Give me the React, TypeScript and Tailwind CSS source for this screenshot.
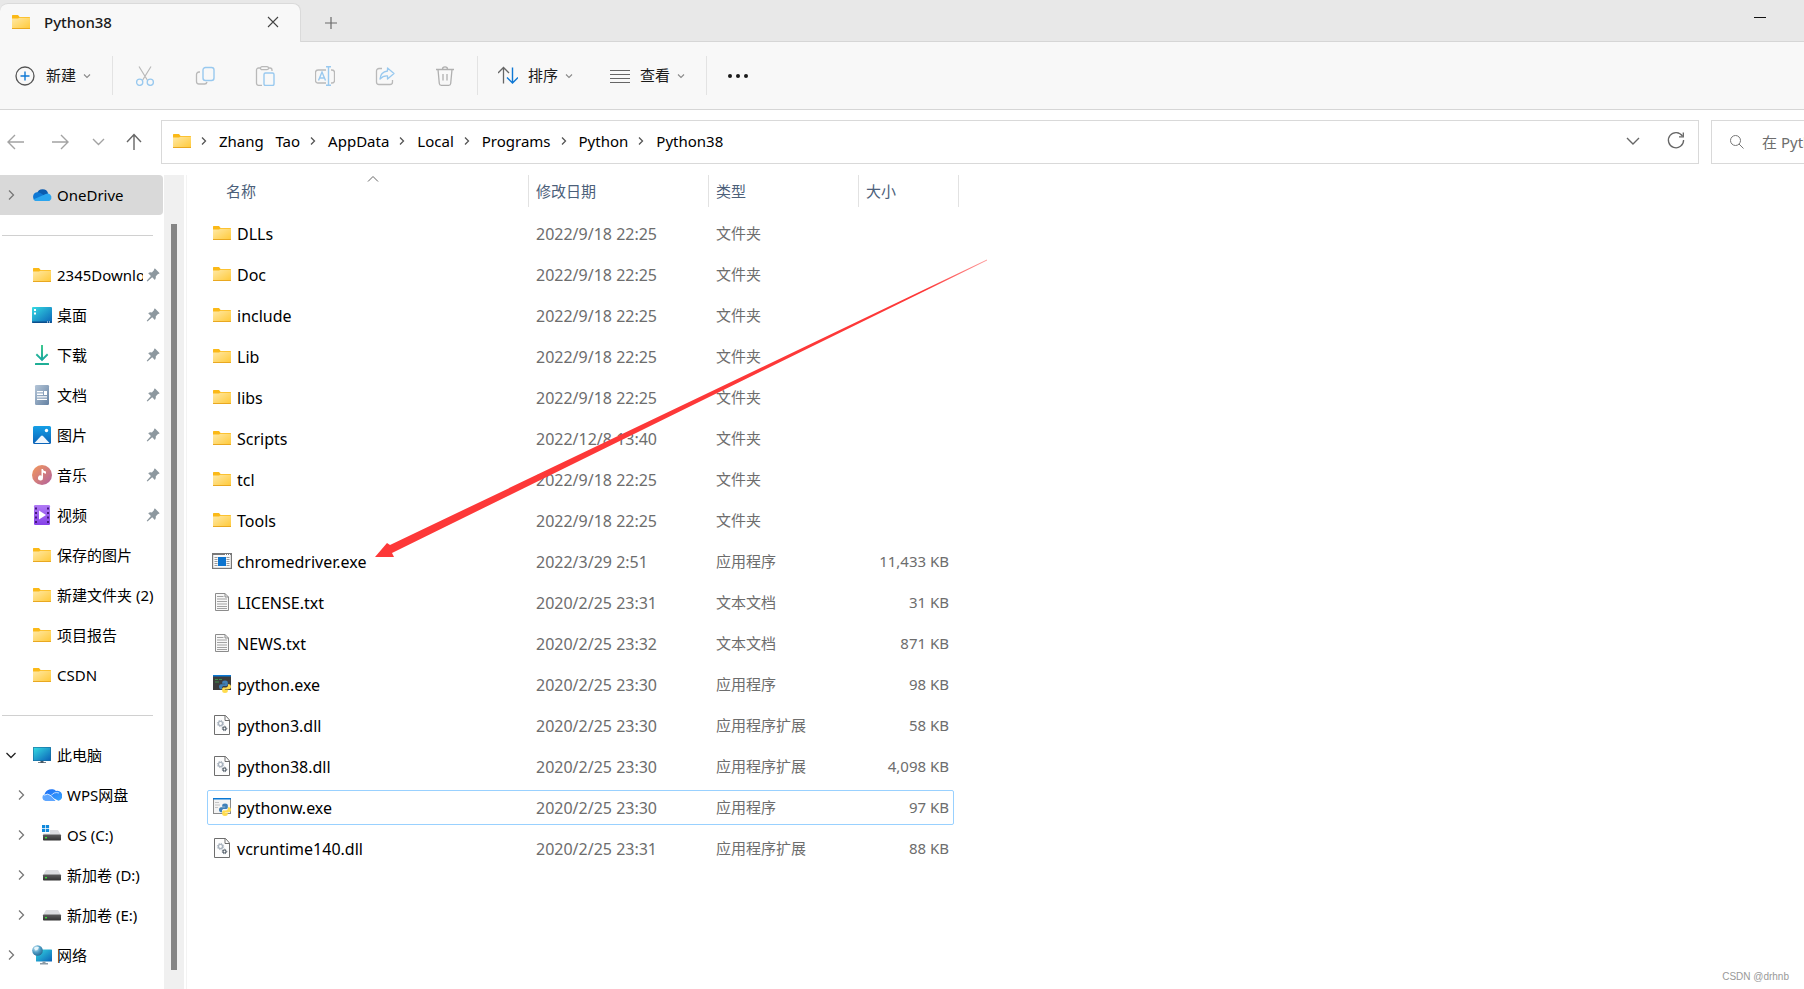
import React from "react";

type IconProps = { className?: string };

const Svg = ({
  size = 20,
  className = "",
  children,
}: {
  size?: number;
  className?: string;
  children: React.ReactNode;
}) => (
  <svg
    width={size}
    height={size}
    viewBox={`0 0 ${size} ${size}`}
    fill="none"
    aria-hidden="true"
    className={`shrink-0 ${className}`}
  >
    {children}
  </svg>
);

// Gradients shared by all icons
const Gradients = () => (
  <svg width="0" height="0" className="absolute" aria-hidden="true">
    <defs>
      <linearGradient id="folder" x1="0" y1="0" x2="1" y2="1">
        <stop offset="0" stopColor="#ffe9a6" />
        <stop offset="1" stopColor="#ffc938" />
      </linearGradient>
      <linearGradient id="screen" x1="0" y1="0" x2="1" y2="1">
        <stop offset="0" stopColor="#35dbe2" />
        <stop offset="1" stopColor="#0b62b8" />
      </linearGradient>
      <linearGradient id="down" x1="0" y1="0" x2="0" y2="1">
        <stop offset="0" stopColor="#3fc98f" />
        <stop offset="1" stopColor="#14a5a0" />
      </linearGradient>
      <linearGradient id="doc" x1="0" y1="0" x2="1" y2="1">
        <stop offset="0" stopColor="#b5c6d8" />
        <stop offset="1" stopColor="#6481a2" />
      </linearGradient>
      <linearGradient id="photo" x1="0" y1="0" x2="0" y2="1">
        <stop offset="0" stopColor="#159fe6" />
        <stop offset="1" stopColor="#0c63b8" />
      </linearGradient>
      <linearGradient id="music" x1="0" y1="0" x2="1" y2="1">
        <stop offset="0" stopColor="#f59a5a" />
        <stop offset="1" stopColor="#b0609f" />
      </linearGradient>
      <linearGradient id="video" x1="0" y1="0" x2="0" y2="1">
        <stop offset="0" stopColor="#b07af5" />
        <stop offset="1" stopColor="#8540e8" />
      </linearGradient>
      <linearGradient id="wps" x1="0" y1="0" x2="1" y2="1">
        <stop offset="0" stopColor="#1a6cf5" />
        <stop offset="1" stopColor="#3aa6ff" />
      </linearGradient>
      <linearGradient id="disk" x1="0" y1="0" x2="0" y2="1">
        <stop offset="0" stopColor="#5d5d5d" />
        <stop offset="1" stopColor="#333333" />
      </linearGradient>
      <radialGradient id="globe" cx="0.35" cy="0.3" r="0.8">
        <stop offset="0" stopColor="#d4f0fb" />
        <stop offset="0.5" stopColor="#4f9cc4" />
        <stop offset="1" stopColor="#1f618c" />
      </radialGradient>
    </defs>
  </svg>
);

const FolderIcon = () => (
  <Svg>
    <path d="M1 3.600C1 3.200 1.300 3 1.700 3H7l1.600 2H18.400c.4 0 .6.200.6.600V8H1z" fill="#fbb917" />
    <path d="M1 6.600H7L8.500 5.700H19V16.400c0 .4-.2.600-.6.600H1.600c-.4 0-.6-.2-.6-.6z" fill="url(#folder)" />
    <path d="M1 16h18v.4c0 .4-.2.600-.6.600H1.600c-.4 0-.6-.2-.6-.6z" fill="#e9a820" />
  </Svg>
);

const OneDriveIcon = () => (
  <Svg>
    <path d="M5 8.500a5.800 5.800 0 0 1 11.200 0L9.500 13z" fill="#0a5cb0" />
    <path d="M4.500 16A4.500 4.500 0 0 1 4.800 7.200c1.400-.1 2.600.2 3.700.9l6 4L6 16z" fill="#0f78d4" />
    <path d="M16 8.500a4 4 0 0 1 1.800 7.200q-.8.300-1.500.3H4.500a4.500 4.500 0 0 1-3.300-1.500L11.500 10q2.200-1.500 4.500-1.500z" fill="#2aa5ef" />
  </Svg>
);

const DesktopIcon = () => (
  <Svg>
    <rect x="0" y="2" width="20" height="16" rx="1" fill="url(#screen)" />
    <path d="M0 16.500h20V17a1 1 0 0 1-1 1H1a1 1 0 0 1-1-1z" fill="#0c4e8c" />
    <path d="M2 4h2v2H2zM2 7.500h2v2H2zM15 16.500h1v1h-1zM17 16.500h1v1h-1z" fill="#fff" />
  </Svg>
);

const DownloadIcon = () => (
  <Svg>
    <path d="M9 0h2v12.500l4-4 1.300 1.400L10 16.200 3.700 9.900 5 8.500l4 4z" fill="url(#down)" />
    <rect x="3" y="18" width="14" height="2" rx=".5" fill="#1fae96" />
  </Svg>
);

const DocumentIcon = () => (
  <Svg>
    <rect x="3" width="14" height="20" rx="1.200" fill="url(#doc)" />
    <path d="M5 6h6v1.300H5zM5 8.600h6v1.300H5zM12 6h3v3.900h-3zM5 11.200h10v1.300H5zM5 13.700h10V15H5z" fill="#fff" />
  </Svg>
);

const PictureIcon = () => (
  <Svg>
    <rect x="1" y="1" width="18" height="18" rx="1.500" fill="url(#photo)" />
    <circle cx="14.500" cy="5.500" r="1.700" fill="#fff" />
    <path d="M2.500 18 9 11q1-1 2 0l6.500 7z" fill="#eef6fd" />
  </Svg>
);

const MusicIcon = () => (
  <Svg>
    <circle cx="10" cy="10" r="10" fill="url(#music)" />
    <path d="M9.500 4h1.300q.4 2 3.200 2.500v2.200Q12 8.500 11 7.500V13a2.500 2.500 0 1 1-1.500-2.300z" fill="#fff" />
  </Svg>
);

const VideoIcon = () => (
  <Svg>
    <rect x="2" width="16" height="20" rx="1.200" fill="url(#video)" />
    <path
      d="M3 2.500h2v2H3zM3 7h2v2H3zM3 11.500h2v2H3zM3 16h2v2H3zM15 2.500h2v2h-2zM15 7h2v2h-2zM15 11.500h2v2h-2zM15 16h2v2h-2z"
      fill="#45187f"
    />
    <path d="M7 5.500 14 10l-7 4.500z" fill="#fff" />
  </Svg>
);

const ComputerIcon = () => (
  <Svg>
    <rect x="1" y="2" width="18" height="14" rx=".6" fill="#16699c" />
    <rect x="1.600" y="2.600" width="16.800" height="12.800" fill="url(#screen)" />
    <path d="M8.500 16h3v1.200H14V18H6v-.8h2.500z" fill="#4a5a66" />
  </Svg>
);

const WpsIcon = () => (
  <Svg>
    <path d="M2.500 9.500A7 7 0 0 1 14 6a5 5 0 0 1 2.500 9.800L9 12z" fill="url(#wps)" />
    <path d="M3.500 16A3.500 3.500 0 0 1 2.500 9.300Q6 7.500 9 10.500L14 16z" fill="#5ea6ff" />
    <path d="M2 10.200Q6 7.800 9 10.800L14 16M9.200 10.500Q12 6.500 17 8" stroke="#fff" strokeWidth=".7" />
  </Svg>
);

const DiskIcon = () => (
  <Svg>
    <path d="M4 5h12l3 5H1z" fill="#dcdde0" />
    <rect x="1" y="9.500" width="18" height="6" rx=".8" fill="url(#disk)" />
    <rect x="3" y="12" width="2" height="1.400" fill="#3fe03f" />
  </Svg>
);

const SystemDiskIcon = () => (
  <Svg>
    <path d="M8 5h8l3 5H1V8.500h7z" fill="#dcdde0" />
    <rect x="1" y="9.500" width="18" height="6" rx=".8" fill="url(#disk)" />
    <rect x="3" y="12" width="2" height="1.400" fill="#3fe03f" />
    <path d="M0 0h3.200v3.200H0zM3.900 0h3.200v3.200H3.900zM0 3.900h3.200v3.200H0zM3.900 3.900h3.200v3.200H3.900z" fill="#1189dc" />
  </Svg>
);

const NetworkIcon = () => (
  <Svg>
    <rect x="4" y="4.500" width="16" height="12" rx=".6" fill="url(#screen)" />
    <path d="M10.500 16.500h3V18H16v1.500H8V18h2.500z" fill="#8b9aa5" />
    <circle cx="5.500" cy="5.500" r="5.300" fill="url(#globe)" />
    <path d="M2 3q3-2 5-.5-1 2.500-3.500 3z" fill="#e6f6fc" />
  </Svg>
);

const AppIcon = () => (
  <Svg>
    <rect x=".6" y="2.600" width="18.800" height="14.800" fill="#fafafa" stroke="#787878" strokeWidth="1.200" />
    <path d="M0 2h20v2H0z" fill="#787878" />
    <path d="M13 3h1v1h-1zM15 3h1v1h-1zM17 3h1v1h-1z" fill="#fff" />
    <path d="M2.500 6.500h3M2.500 8.500h3M2.500 10.500h3M2.500 12.500h3M2.500 14.500h3M14.500 6.500h3M14.500 8.500h3M14.500 10.500h3M14.500 12.500h3M14.500 14.500h3" stroke="#9b9b9b" />
    <rect x="6" y="6" width="8" height="9" fill="#0c74cf" />
  </Svg>
);

const TextIcon = () => (
  <Svg>
    <path d="M3.500 1.500h9.500l3.500 3.500v13.500h-13z" fill="#f8f8f8" stroke="#8c8c8c" />
    <path d="M13 1.500V5h3.500" stroke="#8c8c8c" />
    <path d="M5 4.500h6.500M5 7h10M5 9.500h10M5 12h10M5 14.500h10M5 16.500h10" stroke="#a2a2a2" />
  </Svg>
);

const DllIcon = () => (
  <Svg>
    <path d="M2.500.5h11l4 4.500v14.500h-15z" fill="#fdfdfd" stroke="#6e6e6e" />
    <path d="M13 .5V5.500h4.500" stroke="#6e6e6e" />
    <circle cx="8.500" cy="8.500" r="2.100" stroke="#a8b2bd" strokeWidth="1.400" />
    <circle cx="8.500" cy="8.500" r="3.200" stroke="#a8b2bd" strokeDasharray="1.250 1.260" />
    <circle cx="12.500" cy="13.500" r="1.500" stroke="#58636e" strokeWidth="1.200" />
    <circle cx="12.500" cy="13.500" r="2.300" stroke="#58636e" strokeDasharray=".9 .9" />
  </Svg>
);

const snake =
  "M6 0C4 0 3.200.8 3.200 2v1.200h3v.5H2C.8 3.700 0 4.700 0 6.200S.8 8.700 2 8.700h1V7.300C3 6.100 3.900 5.500 5 5.500h2.400c.9 0 1.400-.6 1.400-1.400V2C8.800.8 8 0 6 0z";

const Snakes = () => (
  <g transform="translate(7 6.500)">
    <path d={snake} fill="#3f80b8" />
    <path d={snake} fill="#ffdc4f" transform="rotate(180 6 6.200)" />
  </g>
);

const PythonIcon = () => (
  <Svg>
    <rect x="1" y="1" width="18" height="15" fill="#3c3c3c" />
    <path d="M1 1h18v1.500H1z" fill="#0a78d4" />
    <path d="M3 5.500h3M7 5.500h3M3 8h4" stroke="#3f8f4a" />
    <Snakes />
  </Svg>
);

const PythonwIcon = () => (
  <Svg>
    <rect x="1.500" y="1.500" width="17" height="15" fill="#f3f3f3" stroke="#8a8a8a" />
    <path d="M1 1h18v1.500H1z" fill="#0a78d4" />
    <path d="M3 5.500h4M3 8h5M3 10.500h3" stroke="#c4c4c4" />
    <Snakes />
  </Svg>
);

const PinIcon = () => (
  <Svg size={14}>
    <path
      d="M8.300.800q.5-.5 1 0l3.900 3.900q.5.500 0 1l-1.200.4L9.800 8.300q.5 2.200-.9 3.700L6.200 9.300 1.500 13.500l-.8-.8L4.900 8 2.200 5.300Q3.700 3.900 5.900 4.400l2-2.200z"
      fill="#8d989f"
    />
  </Svg>
);

const Chevron = ({ className = "" }: IconProps) => (
  <Svg size={10} className={className}>
    <path d="m3 .500 4.500 4.500L3 9.500" stroke="currentColor" strokeWidth="1.300" />
  </Svg>
);

const SmallCaret = () => (
  <Svg size={8} className="text-[#8a8a8a]">
    <path d="m1 2.500 3 3 3-3" stroke="currentColor" strokeWidth="1.100" />
  </Svg>
);

const CutIcon = () => (
  <Svg>
    <path d="M4 .5 12.300 14M16 .5 7.700 14" stroke="#b9b9b9" strokeWidth="1.200" />
    <circle cx="4.700" cy="16.300" r="3.100" stroke="#99c9ef" strokeWidth="1.300" />
    <circle cx="15.300" cy="16.300" r="3.100" stroke="#99c9ef" strokeWidth="1.300" />
  </Svg>
);

const CopyIcon = () => (
  <Svg>
    <path d="M5 6H4a2.500 2.500 0 0 0-2.500 2.500v7A2.500 2.500 0 0 0 4 18h5.500a2.500 2.500 0 0 0 2.500-2" stroke="#b9b9b9" strokeWidth="1.300" />
    <rect x="8" y="1.500" width="11" height="13" rx="2.500" stroke="#99c9ef" strokeWidth="1.400" />
  </Svg>
);

const PasteIcon = () => (
  <Svg>
    <path d="M7 19.300H3.500a2 2 0 0 1-2-2V4a2 2 0 0 1 2-2h2M13 2h2a2 2 0 0 1 2 2v1" stroke="#b9b9b9" strokeWidth="1.300" />
    <rect x="5.500" y=".7" width="8" height="3" rx="1.500" stroke="#b9b9b9" strokeWidth="1.300" />
    <rect x="9" y="7" width="10" height="12.500" rx="1.500" stroke="#99c9ef" strokeWidth="1.400" />
  </Svg>
);

const RenameIcon = () => (
  <Svg>
    <path d="M11 17H3a2.500 2.500 0 0 1-2.500-2.500v-8A2.500 2.500 0 0 1 3 4h8M16 4h1a2.500 2.500 0 0 1 2.500 2.500v8A2.500 2.500 0 0 1 17 17h-1" stroke="#b9b9b9" strokeWidth="1.300" />
    <path d="M11 .8h5M11 19.300h5M13.500 1v18M3.500 14.500 7 6l3.500 8.500M4.700 12h4.600" stroke="#99c9ef" strokeWidth="1.400" />
  </Svg>
);

const ShareIcon = () => (
  <Svg>
    <path d="M7 2.500H4A2.500 2.500 0 0 0 1.500 5v11A2.500 2.500 0 0 0 4 18.500h11a2.500 2.500 0 0 0 2.500-2.500v-2" stroke="#b9b9b9" strokeWidth="1.300" />
    <path d="M12.500 2 19 7.500 12.500 13V9.800Q8 9.500 5 13 5.500 6 12.500 5z" stroke="#99c9ef" strokeWidth="1.300" strokeLinejoin="round" />
  </Svg>
);

const DeleteIcon = () => (
  <Svg>
    <path d="M1 3.500h18M7.500 3Q7.500.8 10 .8T12.500 3M3 3.500l1.300 14a2 2 0 0 0 2 1.800h7.400a2 2 0 0 0 2-1.800l1.300-14M8 8v6.500M12 8v6.500" stroke="#b0b0b0" strokeWidth="1.300" />
  </Svg>
);

const disabledTools = [
  { label: "剪切", icon: <CutIcon /> },
  { label: "复制", icon: <CopyIcon /> },
  { label: "粘贴", icon: <PasteIcon /> },
  { label: "重命名", icon: <RenameIcon /> },
  { label: "共享", icon: <ShareIcon /> },
  { label: "删除", icon: <DeleteIcon /> },
];

const breadcrumbs = ["Zhang   Tao", "AppData", "Local", "Programs", "Python", "Python38"];

type Place = {
  name: string;
  icon: React.ReactNode;
  pinned?: boolean;
  arrow?: "right" | "down";
  nested?: boolean;
  active?: boolean;
};

const cloud: Place[] = [{ name: "OneDrive", icon: <OneDriveIcon />, arrow: "right", active: true }];

const quickAccess: Place[] = [
  { name: "2345Downloads", icon: <FolderIcon />, pinned: true },
  { name: "桌面", icon: <DesktopIcon />, pinned: true },
  { name: "下载", icon: <DownloadIcon />, pinned: true },
  { name: "文档", icon: <DocumentIcon />, pinned: true },
  { name: "图片", icon: <PictureIcon />, pinned: true },
  { name: "音乐", icon: <MusicIcon />, pinned: true },
  { name: "视频", icon: <VideoIcon />, pinned: true },
  { name: "保存的图片", icon: <FolderIcon /> },
  { name: "新建文件夹 (2)", icon: <FolderIcon /> },
  { name: "项目报告", icon: <FolderIcon /> },
  { name: "CSDN", icon: <FolderIcon /> },
];

const devices: Place[] = [
  { name: "此电脑", icon: <ComputerIcon />, arrow: "down" },
  { name: "WPS网盘", icon: <WpsIcon />, arrow: "right", nested: true },
  { name: "OS (C:)", icon: <SystemDiskIcon />, arrow: "right", nested: true },
  { name: "新加卷 (D:)", icon: <DiskIcon />, arrow: "right", nested: true },
  { name: "新加卷 (E:)", icon: <DiskIcon />, arrow: "right", nested: true },
  { name: "网络", icon: <NetworkIcon />, arrow: "right" },
];

const files = [
  { name: "DLLs", date: "2022/9/18 22:25", type: "文件夹", size: "", icon: <FolderIcon /> },
  { name: "Doc", date: "2022/9/18 22:25", type: "文件夹", size: "", icon: <FolderIcon /> },
  { name: "include", date: "2022/9/18 22:25", type: "文件夹", size: "", icon: <FolderIcon /> },
  { name: "Lib", date: "2022/9/18 22:25", type: "文件夹", size: "", icon: <FolderIcon /> },
  { name: "libs", date: "2022/9/18 22:25", type: "文件夹", size: "", icon: <FolderIcon /> },
  { name: "Scripts", date: "2022/12/8 13:40", type: "文件夹", size: "", icon: <FolderIcon /> },
  { name: "tcl", date: "2022/9/18 22:25", type: "文件夹", size: "", icon: <FolderIcon /> },
  { name: "Tools", date: "2022/9/18 22:25", type: "文件夹", size: "", icon: <FolderIcon /> },
  { name: "chromedriver.exe", date: "2022/3/29 2:51", type: "应用程序", size: "11,433 KB", icon: <AppIcon /> },
  { name: "LICENSE.txt", date: "2020/2/25 23:31", type: "文本文档", size: "31 KB", icon: <TextIcon /> },
  { name: "NEWS.txt", date: "2020/2/25 23:32", type: "文本文档", size: "871 KB", icon: <TextIcon /> },
  { name: "python.exe", date: "2020/2/25 23:30", type: "应用程序", size: "98 KB", icon: <PythonIcon /> },
  { name: "python3.dll", date: "2020/2/25 23:30", type: "应用程序扩展", size: "58 KB", icon: <DllIcon /> },
  { name: "python38.dll", date: "2020/2/25 23:30", type: "应用程序扩展", size: "4,098 KB", icon: <DllIcon /> },
  { name: "pythonw.exe", date: "2020/2/25 23:30", type: "应用程序", size: "97 KB", icon: <PythonwIcon />, focused: true },
  { name: "vcruntime140.dll", date: "2020/2/25 23:31", type: "应用程序扩展", size: "88 KB", icon: <DllIcon /> },
];

const TabBar = () => (
  <header className="flex h-[42px] items-end border-b border-[#d6d6d6] bg-[#e8e8e8]">
    <div className="-mb-px flex h-[39px] w-[301px] items-center rounded-t-lg border-r border-t border-[#dadada] bg-[#f8f8f8] pb-[2px] pl-[11px] pr-[20px]">
      <FolderIcon />
      <span className="ml-[13px] flex-1 text-[15px] font-medium text-[#1b1b1b]">Python38</span>
      <button type="button" aria-label="关闭标签页">
        <Svg size={14}>
          <path d="m2 2 10 10M12 2 2 12" stroke="#444" strokeWidth="1.100" />
        </Svg>
      </button>
    </div>
    <button type="button" aria-label="新建标签页" className="mb-[11px] ml-[23px]">
      <Svg size={14}>
        <path d="M7 1v12M1 7h12" stroke="#6a6a6a" strokeWidth="1.200" />
      </Svg>
    </button>
    <button type="button" aria-label="最小化" className="mb-[17px] ml-auto mr-[37px]">
      <Svg size={14}>
        <path d="M1 7.500h12" stroke="#111" />
      </Svg>
    </button>
  </header>
);

const Divider = () => <div className="h-[39px] w-px shrink-0 bg-[#e3e3e3]" />;

const Toolbar = () => (
  <div className="flex h-[68px] items-center border-b border-[#d6d6d6] bg-[#f8f8f8] text-[15px] text-[#1b1b1b]">
    <button type="button" className="mr-[21px] flex items-center pl-[15px]">
      <Svg>
        <circle cx="10" cy="10" r="9" stroke="#555" strokeWidth="1.300" />
        <path d="M10 5.500v9M5.500 10h9" stroke="#0f78d4" strokeWidth="1.400" />
      </Svg>
      <span className="ml-[11px] mr-[7px]">新建</span>
      <SmallCaret />
    </button>
    <Divider />
    <div className="flex px-[2px]">
      {disabledTools.map((tool) => (
        <button key={tool.label} type="button" disabled aria-label={tool.label} className="flex w-[60px] justify-center">
          {tool.icon}
        </button>
      ))}
    </div>
    <Divider />
    <button type="button" className="flex items-center pl-[20px]">
      <Svg>
        <path d="M5.500 17.500V2M0 7l5.500-5.500L11 7" stroke="#666" strokeWidth="1.300" />
        <path d="M14.500 1.500V17M9 11.500l5.500 5.500 5.500-5.500" stroke="#0f78d4" strokeWidth="1.400" />
      </Svg>
      <span className="ml-[10px] mr-[7px]">排序</span>
      <SmallCaret />
    </button>
    <button type="button" className="mr-[21px] flex items-center pl-[37px]">
      <Svg>
        <path d="M0 4.500h20M0 8.500h20M0 12.500h20M0 16.500h20" stroke="#666" />
      </Svg>
      <span className="ml-[10px] mr-[7px]">查看</span>
      <SmallCaret />
    </button>
    <Divider />
    <button type="button" aria-label="更多" className="ml-[21px]">
      <Svg>
        <circle cx="2" cy="10" r="2" fill="#1b1b1b" />
        <circle cx="10" cy="10" r="2" fill="#1b1b1b" />
        <circle cx="18" cy="10" r="2" fill="#1b1b1b" />
      </Svg>
    </button>
  </div>
);

const AddressBar = () => (
  <div className="flex items-center pt-[10px]">
    <div className="flex w-[161px] shrink-0 items-center pl-[6px]">
      <button type="button" aria-label="后退" className="mr-[24px]">
        <Svg>
          <path d="M18 10H2.500M9 3 2 10l7 7" stroke="#a3a3a3" strokeWidth="1.400" />
        </Svg>
      </button>
      <button type="button" aria-label="前进" className="mr-[19px]">
        <Svg>
          <path d="M2 10h15.500M11 3l7 7-7 7" stroke="#a3a3a3" strokeWidth="1.400" />
        </Svg>
      </button>
      <button type="button" aria-label="最近位置" className="mr-[15px]">
        <Svg>
          <path d="m4 7 5.500 5.500L15 7" stroke="#a3a3a3" strokeWidth="1.400" />
        </Svg>
      </button>
      <button type="button" aria-label="向上">
        <Svg>
          <path d="M10 18V2.500M3 10l7-7.500 7 7.500" stroke="#666" strokeWidth="1.400" />
        </Svg>
      </button>
    </div>
    <div className="flex h-[44px] min-w-0 flex-1 items-center border border-[#d9d9d9] pb-[2px] pl-[10px] pr-[12px] text-[15px] text-black">
      <FolderIcon />
      <nav aria-label="路径" className="-ml-px flex min-w-0 flex-1 items-center">
        {breadcrumbs.map((crumb) => (
          <React.Fragment key={crumb}>
            <Svg size={10} className="mx-[9px] text-[#555]">
              <path d="m2 1.500 3.500 3.500L2 8.500" stroke="currentColor" strokeWidth="1.300" />
            </Svg>
            <a href="#" className="whitespace-pre">
              {crumb}
            </a>
          </React.Fragment>
        ))}
      </nav>
      <button type="button" aria-label="历史记录" className="mr-[23px]">
        <Svg>
          <path d="m4 7 6 6 6-6" stroke="#666" strokeWidth="1.400" />
        </Svg>
      </button>
      <button type="button" aria-label="刷新">
        <Svg>
          <path d="M16.500 5.200A7.600 7.600 0 1 0 17.600 9" stroke="#666" strokeWidth="1.300" />
          <path d="M17.300 1.500v4.300H13" stroke="#666" strokeWidth="1.300" />
        </Svg>
      </button>
    </div>
    <label className="ml-[12px] flex h-[44px] w-[93px] shrink-0 items-center border-y border-l border-[#d9d9d9] pl-[18px]">
      <Svg size={14}>
        <circle cx="5.500" cy="5.500" r="5" stroke="#777" />
        <path d="m9 9 4.500 4.500" stroke="#777" />
      </Svg>
      <input
        type="text"
        aria-label="搜索"
        placeholder="在 Python38 中搜索"
        className="ml-[18px] w-full min-w-0 text-[15px] outline-none placeholder:text-[#6d6d6d]"
      />
    </label>
  </div>
);

const PlaceRow = ({ place }: { place: Place }) => (
  <li>
    <a
      href="#"
      className={`flex h-[40px] items-center overflow-hidden whitespace-nowrap rounded-r-sm text-[15px] text-black ${
        place.nested ? "pl-[16px]" : "pl-[6px]"
      } ${place.active ? "bg-[#d9d9d9]" : ""}`}
    >
      <span className="w-[26px] shrink-0">
        {place.arrow === "right" && <Chevron className="text-[#777]" />}
        {place.arrow === "down" && <Chevron className="rotate-90 text-[#222]" />}
      </span>
      {place.icon}
      <span className={`ml-[5px] flex-1 ${place.pinned ? "overflow-hidden" : ""}`}>{place.name}</span>
      {place.pinned && (
        <span className="w-[20px] shrink-0 pl-[3px]">
          <PinIcon />
        </span>
      )}
    </a>
  </li>
);

const Separator = () => (
  <li role="separator" className="flex h-[40px] items-center pl-[2px] pr-[10px]">
    <span className="h-px w-full bg-[#d0d0d0]" />
  </li>
);

const Sidebar = () => (
  <aside className="flex w-[188px] shrink-0 pt-[11px]">
    <ul className="w-[163px] shrink-0">
      {cloud.map((place) => (
        <PlaceRow key={place.name} place={place} />
      ))}
      <Separator />
      {quickAccess.map((place) => (
        <PlaceRow key={place.name} place={place} />
      ))}
      <Separator />
      {devices.map((place) => (
        <PlaceRow key={place.name} place={place} />
      ))}
    </ul>
    <div className="ml-px mr-[2px] flex w-[20px] justify-center bg-[#f0f0f0] pb-[19px] pt-[49px]">
      <div className="w-[6px] bg-[#858585]" />
    </div>
    <div className="w-px bg-[#f3f3f3]" />
  </aside>
);

const FileTable = () => (
  <table className="w-[747px] table-fixed border-separate border-spacing-x-0 border-spacing-y-[6px] text-left text-[15px] text-[#6d6d6d]">
    <colgroup>
      <col className="w-[322px]" />
      <col className="w-[180px]" />
      <col className="w-[150px]" />
      <col className="w-[95px]" />
    </colgroup>
    <thead className="text-[#4c607a]">
      <tr className="h-[35px] align-top">
        <th className="relative p-0 font-normal">
          <div className="flex h-[32px] items-center border-r border-[#e2e2e2] pl-[19px]">名称</div>
          <Svg size={12} className="absolute left-[160px] top-0">
            <path d="m1 6.500 5-5 5 5" stroke="#666" />
          </Svg>
        </th>
        <th className="p-0 font-normal">
          <div className="flex h-[32px] items-center border-r border-[#e2e2e2] pl-[7px]">修改日期</div>
        </th>
        <th className="p-0 font-normal">
          <div className="flex h-[32px] items-center border-r border-[#e2e2e2] pl-[7px]">类型</div>
        </th>
        <th className="p-0 font-normal">
          <div className="-mr-[5px] flex h-[32px] items-center border-r border-[#e2e2e2] pl-[7px]">大小</div>
        </th>
      </tr>
    </thead>
    <tbody>
      {files.map((file) => (
        <tr
          key={file.name}
          className={`h-[35px] ${file.focused ? "rounded-xs outline-1 -outline-offset-1 outline-[#99d1ff]" : ""}`}
        >
          <td className="p-0 text-[16px] text-black">
            <a href="#" className="flex items-center gap-[5px] pl-[5px]">
              <span className="pb-[2px]">{file.icon}</span>
              {file.name}
            </a>
          </td>
          <td className="py-0 pl-[7px] pr-0 text-[16px]">{file.date}</td>
          <td className="py-0 pl-[7px] pr-0">{file.type}</td>
          <td className="py-0 pl-0 pr-[5px] text-right">{file.size}</td>
        </tr>
      ))}
    </tbody>
  </table>
);

// Red pointer drawn over the list, towards chromedriver.exe
const Pointer = () => (
  <svg
    width="614"
    height="300"
    viewBox="0 0 614 300"
    aria-hidden="true"
    className="pointer-events-none absolute left-[187px] top-[95px]"
  >
    <defs>
      <linearGradient id="pointer" gradientUnits="userSpaceOnUse" x1="0" y1="298" x2="612" y2="1">
        <stop offset="0" stopColor="#fd3838" />
        <stop offset="0.9" stopColor="#fd3838" />
        <stop offset="1" stopColor="#fd3838" stopOpacity="0.500" />
      </linearGradient>
    </defs>
    <path d="M0 298 12 284 15 286 612 .6 612 1.400 17 294 19 298z" fill="url(#pointer)" />
  </svg>
);

export default function App() {
  return (
    <div className="relative flex min-h-screen flex-col overflow-hidden bg-white font-['Noto_Sans','Noto_Sans_CJK_SC',sans-serif]">
      <Gradients />
      <TabBar />
      <Toolbar />
      <AddressBar />
      <div className="flex flex-1">
        <Sidebar />
        <main className="relative min-w-0 flex-1 pl-[19px]">
          <div className="pt-[5px]">
            <FileTable />
          </div>
          <Pointer />
        </main>
      </div>
      <p className="absolute bottom-[5px] right-[15px] font-['Liberation_Sans',sans-serif] text-[10px] text-[#999]">
        CSDN @drhnb
      </p>
    </div>
  );
}
